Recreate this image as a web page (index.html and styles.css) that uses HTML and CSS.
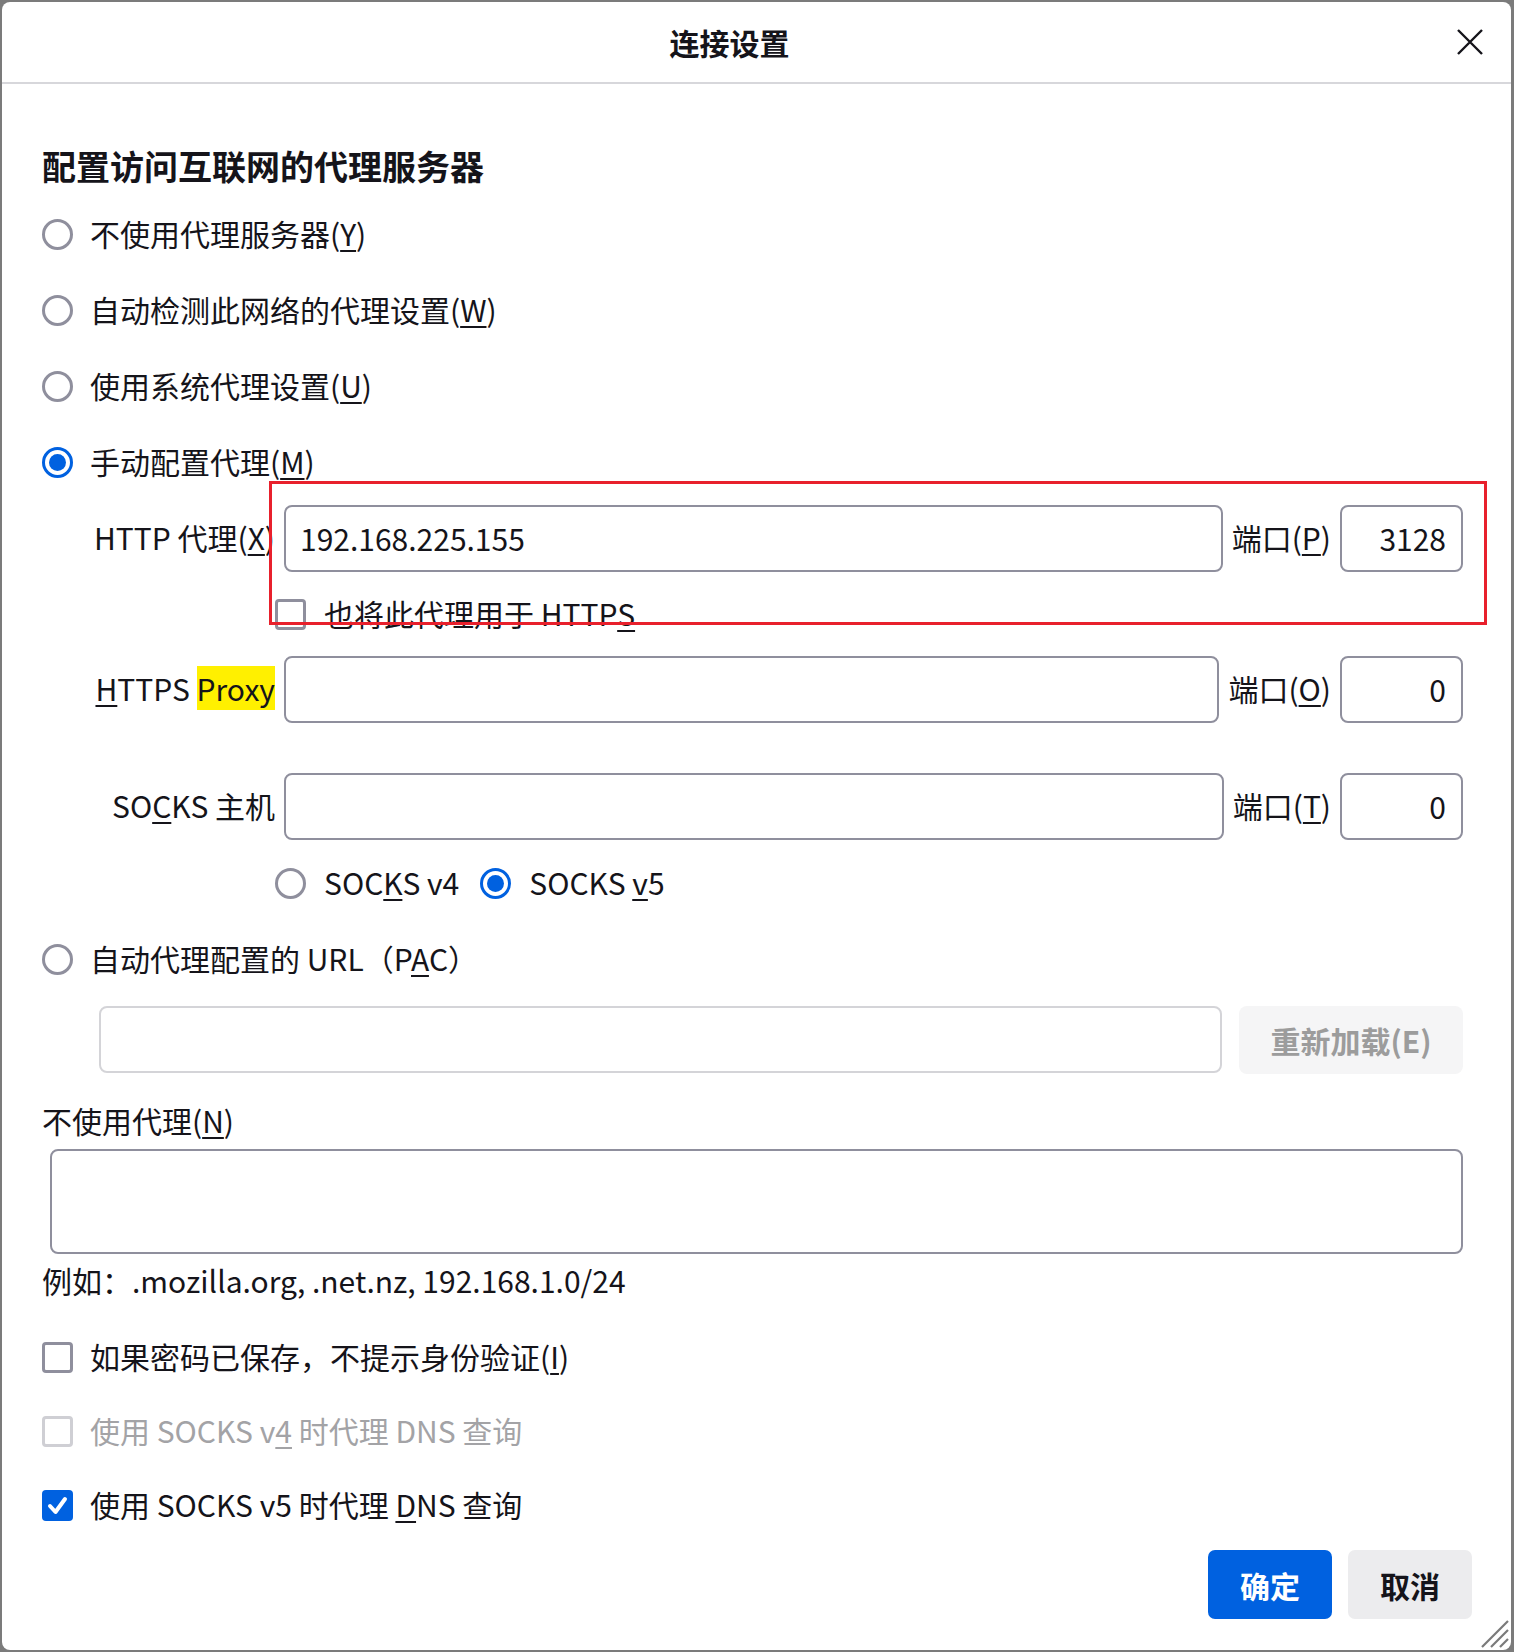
FILE: index.html
```html
<!DOCTYPE html>
<html>

<head>
    <meta charset="utf-8">
    <title>连接设置</title>
    <meta name="viewport" content="width=device-width, initial-scale=1">
    <link rel="stylesheet" href="styles.css">
</head>

<body>
    <div class="dialog">
        <header class="dialog-header">
            <h1 class="dialog-title">连接设置</h1>
            <button class="close-btn" aria-label="关闭">
                <svg width="26" height="26" viewBox="0 0 26 26">
                    <path d="M1 1 L25 25 M25 1 L1 25" stroke="#15141a" stroke-width="2.4" fill="none" />
                </svg>
            </button>
        </header>

        <main class="dialog-body">
            <h2 class="section-title">配置访问互联网的代理服务器</h2>

            <div class="option"><span class="radio"></span><span class="text">不使用代理服务器(<u>Y</u>)</span></div>
            <div class="option"><span class="radio"></span><span class="text">自动检测此网络的代理设置(<u>W</u>)</span></div>
            <div class="option"><span class="radio"></span><span class="text">使用系统代理设置(<u>U</u>)</span></div>
            <div class="option"><span class="radio checked"></span><span class="text">手动配置代理(<u>M</u>)</span></div>

            <div class="proxy-row first">
                <label class="proxy-label text">HTTP 代理(<u>X</u>)</label>
                <input class="field" type="text" value="192.168.225.155">
                <label class="port-label text">端口(<u>P</u>)</label>
                <input class="field port" type="text" value="3128">
            </div>
            <div class="share-row"><span class="checkbox"></span><span class="text">也将此代理用于 HTTP<u>S</u></span></div>

            <div class="proxy-row">
                <label class="proxy-label text"><u>H</u>TTPS <mark>Proxy</mark></label>
                <input class="field" type="text" value="">
                <label class="port-label text">端口(<u>O</u>)</label>
                <input class="field port" type="text" value="0">
            </div>

            <div class="proxy-row socks">
                <label class="proxy-label text">SO<u>C</u>KS 主机</label>
                <input class="field" type="text" value="">
                <label class="port-label text">端口(<u>T</u>)</label>
                <input class="field port" type="text" value="0">
            </div>
            <div class="socks-version">
                <span class="choice"><span class="radio"></span><span class="text">SOC<u>K</u>S v4</span></span>
                <span class="choice"><span class="radio checked"></span><span class="text">SOCKS <u>v</u>5</span></span>
            </div>

            <div class="option pac"><span class="radio"></span><span class="text">自动代理配置的 URL（P<u>A</u>C）</span></div>
            <div class="pac-row">
                <input class="field disabled" type="text" value="" disabled>
                <button class="reload-btn" disabled>重新加载(E)</button>
            </div>

            <div class="no-proxy-label">不使用代理(<u>N</u>)</div>
            <textarea class="no-proxy-box"></textarea>
            <div class="hint">例如：.mozilla.org, .net.nz, 192.168.1.0/24</div>

            <div class="check-list">
                <div class="option check"><span class="checkbox"></span><span class="text">如果密码已保存，不提示身份验证(<u>I</u>)</span></div>
                <div class="option check disabled"><span class="checkbox"></span><span class="text">使用 SOCKS v<u>4</u> 时代理 DNS 查询</span></div>
                <div class="option check">
                    <span class="checkbox checked">
                        <svg width="31" height="31" viewBox="0 0 31 31">
                            <path d="M8 16 L13.5 22 L23 9" stroke="#fff" stroke-width="4" fill="none" stroke-linecap="round" stroke-linejoin="round" />
                        </svg>
                    </span>
                    <span class="text">使用 SOCKS v5 时代理 <u>D</u>NS 查询</span>
                </div>
            </div>
        </main>

        <footer class="dialog-footer">
            <button class="btn primary">确定</button>
            <button class="btn">取消</button>
        </footer>

        <!-- screenshot annotation -->
        <div class="annotation"></div>

        <svg class="grip" width="30" height="30" viewBox="0 0 30 30">
            <path d="M2 28 L28 2 M11 28 L28 11 M20 28 L28 20" stroke="#7a7a7a" stroke-width="2.2" />
        </svg>
    </div>
</body>

</html>
```

FILE: styles.css
```css
body {
    margin: 0;
    padding: 0;
    background-color: #7b7b7b;
    font-family: "Noto Sans CJK SC", "Noto Sans", sans-serif;
    font-size: 30px;
    color: #15141a;
}

.dialog {
    position: relative;
    display: flex;
    flex-direction: column;
    height: 1648px;
    margin: 2px 3px 2px 2px;
    background-color: #fff;
    border-radius: 8px;
    overflow: hidden;
}

.dialog-header {
    display: flex;
    align-items: center;
    height: 80px;
    border-bottom: 2px solid #d7d7db;
}

.dialog-title {
    flex: 1;
    margin: 0;
    padding-left: 11px;
    font-size: 30px;
    font-weight: 700;
    text-align: center;
}

.close-btn {
    display: flex;
    align-items: center;
    justify-content: center;
    width: 48px;
    height: 48px;
    margin-right: 17px;
    padding: 0;
    border: none;
    background: none;
}

.dialog-body {
    padding: 0 48px 0 40px;
}

.section-title {
    margin: 54px 0 0;
    height: 56px;
    line-height: 56px;
    font-size: 34px;
    font-weight: 700;
}

u {
    text-decoration-thickness: 2px;
    text-underline-offset: 4px;
}

/* noto cjk sits a little low in its line box */
.text {
    padding-bottom: 3px;
}

.option {
    display: flex;
    align-items: center;
    gap: 17px;
    height: 76px;
    white-space: nowrap;
}

.option:first-of-type {
    margin-top: 2px;
}

.option.pac {
    height: 66px;
}

.radio {
    position: relative;
    flex: none;
    box-sizing: border-box;
    width: 31px;
    height: 31px;
    border: 3px solid #8f8f9d;
    border-radius: 50%;
    background-color: #fff;
}

.radio.checked {
    border-color: #0061e0;
}

.radio.checked::after {
    content: "";
    position: absolute;
    left: 4px;
    top: 4px;
    width: 17px;
    height: 17px;
    border-radius: 50%;
    background-color: #0061e0;
}

.checkbox {
    flex: none;
    box-sizing: border-box;
    width: 31px;
    height: 31px;
    border: 3px solid #8f8f9d;
    border-radius: 4px;
    background-color: #fff;
}

.checkbox.checked {
    border: none;
    background-color: #0061e0;
}

.checkbox.checked svg {
    display: block;
}

.proxy-row {
    display: flex;
    align-items: center;
    height: 67px;
}

.proxy-row.first {
    margin-top: 5px;
}

.proxy-row.socks {
    margin-top: 50px;
}

.proxy-label {
    flex: none;
    width: 233px;
    margin-right: 9px;
    text-align: right;
    white-space: nowrap;
}

mark {
    background-color: #fff000;
    color: #15141a;
}

.field {
    box-sizing: border-box;
    height: 67px;
    padding: 0 14px 2px;
    border: 2px solid #8f8f9d;
    border-radius: 8px;
    font: inherit;
    color: #15141a;
    background-color: #fff;
    outline: none;
}

.proxy-row .field {
    flex: 1;
    min-width: 0;
}

.proxy-row .field.port {
    flex: none;
    width: 123px;
    padding-right: 15px;
    text-align: right;
}

.port-label {
    flex: none;
    padding-left: 9px;
    padding-right: 9px;
    white-space: nowrap;
}

.share-row {
    display: flex;
    align-items: center;
    gap: 18px;
    height: 84px;
    padding-left: 233px;
    white-space: nowrap;
}

.socks-version {
    display: flex;
    align-items: center;
    gap: 21px;
    height: 86px;
    padding-left: 233px;
}

.choice {
    display: flex;
    align-items: center;
    gap: 18px;
    white-space: nowrap;
}

.pac-row {
    display: flex;
    gap: 17px;
    margin-top: 14px;
    padding-left: 57px;
}

.pac-row .field {
    flex: 1;
    min-width: 0;
    border-color: #d4d4d8;
}

.reload-btn {
    flex: none;
    width: 224px;
    height: 68px;
    border: none;
    border-radius: 8px;
    background-color: #f5f5f6;
    font: inherit;
    font-weight: 700;
    color: #9c9c9c;
}

.no-proxy-label {
    margin-top: 22px;
    height: 48px;
    line-height: 48px;
}

.no-proxy-box {
    display: block;
    box-sizing: border-box;
    width: calc(100% - 8px);
    height: 105px;
    margin: 5px 0 0 8px;
    border: 2px solid #8f8f9d;
    border-radius: 8px;
    resize: none;
    font: inherit;
    outline: none;
}

.hint {
    margin-top: 2px;
    height: 48px;
    line-height: 48px;
}

.check-list {
    margin-top: 16px;
}

.option.check {
    height: 74px;
}

.option.check.disabled {
    color: #a3a3a6;
}

.option.check.disabled .checkbox {
    border-color: #cfcfd4;
}

.dialog-footer {
    display: flex;
    justify-content: flex-end;
    gap: 16px;
    margin-top: 8px;
    padding-right: 39px;
}

.btn {
    width: 124px;
    height: 69px;
    border: none;
    border-radius: 7px;
    background-color: #ececee;
    font: inherit;
    font-weight: 700;
    color: #15141a;
}

.btn.primary {
    background-color: #0061e0;
    color: #fff;
}

.annotation {
    position: absolute;
    left: 267px;
    top: 479px;
    width: 1218px;
    height: 144px;
    box-sizing: border-box;
    border: 3px solid #e8202c;
    pointer-events: none;
}

.grip {
    position: absolute;
    right: 1px;
    bottom: 1px;
}
```
